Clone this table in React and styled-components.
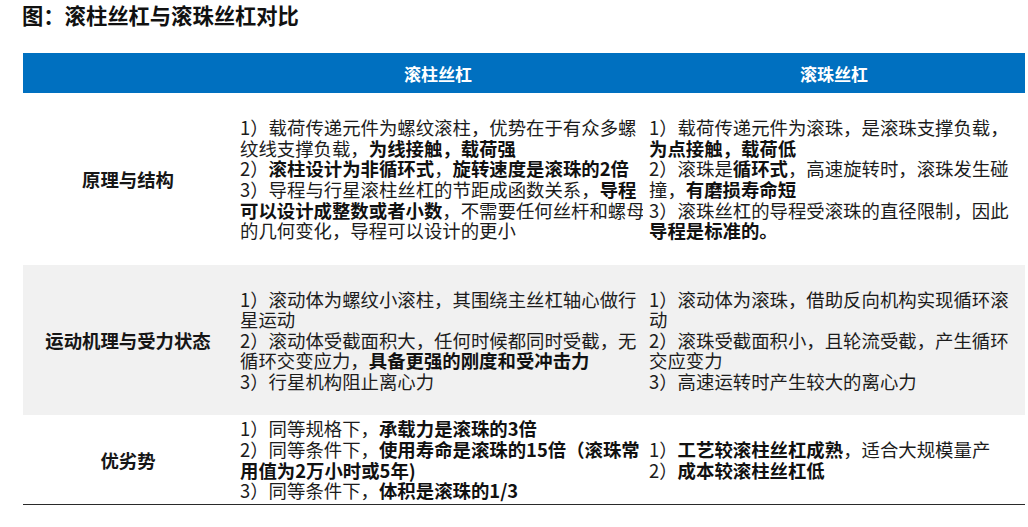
import React from "react";
import styled, { createGlobalStyle } from "styled-components";

const Global = createGlobalStyle`
  html, body { margin: 0; padding: 0; background: #ffffff; }
  body {
    font-family: "Noto Sans CJK SC", "Noto Sans", sans-serif;
    color: #1c1c1c;
  }
`;

const Page = styled.div`
  width: 1028px;
  height: 527px;
  overflow: hidden;
  padding: 0 0 0 22px;
  box-sizing: border-box;
`;

const Title = styled.h1`
  margin: 0 0 25px 0;
  padding-top: 1px;
  font-size: 21.3px;
  line-height: 27px;
  font-weight: 700;
  color: #111;
`;

const Table = styled.div`
  display: grid;
  grid-template-columns: 210px 410px 382px;
  grid-template-rows: 40px 172px 150px 89px;
  margin-left: 1px;
  width: 1002px;
  border-bottom: 1.5px solid #2a2a2a;
`;

const HeadCell = styled.div`
  background: #0070c0;
  color: #ffffff;
  font-weight: 700;
  font-size: 17px;
  display: flex;
  align-items: center;
  justify-content: center;
`;

const LabelCell = styled.div`
  background: ${(p) => (p.$shade ? "#f1f1f1" : "#ffffff")};
  display: flex;
  align-items: center;
  justify-content: center;
  font-size: 18.4px;
  font-weight: 700;
  color: #161616;
`;

const TextCell = styled.div`
  background: ${(p) => (p.$shade ? "#f1f1f1" : "#ffffff")};
  display: flex;
  flex-direction: column;
  justify-content: center;
  padding-left: ${(p) => p.$pad}px;
  font-size: 18.4px;
  line-height: 20.6px;
  color: #1c1c1c;
`;

const Line = styled.div`
  white-space: nowrap;
`;

const B = styled.b`
  font-weight: 700;
  color: #111;
`;

const rows = [
  {
    label: "原理与结构",
    shade: false,
    a: [
      ["1）载荷传递元件为螺纹滚柱，优势在于有众多螺"],
      ["纹线支撑负载，", <B key="b">为线接触，载荷强</B>],
      ["2）", <B key="b1">滚柱设计为非循环式</B>, "，", <B key="b2">旋转速度是滚珠的2倍</B>],
      ["3）导程与行星滚柱丝杠的节距成函数关系，", <B key="b">导程</B>],
      [<B key="b">可以设计成整数或者小数</B>, "，不需要任何丝杆和螺母"],
      ["的几何变化，导程可以设计的更小"],
    ],
    b: [
      ["1）载荷传递元件为滚珠，是滚珠支撑负载，"],
      [<B key="b">为点接触，载荷低</B>],
      ["2）滚珠是", <B key="b">循环式</B>, "，高速旋转时，滚珠发生碰"],
      ["撞，", <B key="b">有磨损寿命短</B>],
      ["3）滚珠丝杠的导程受滚珠的直径限制，因此"],
      [<B key="b">导程是标准的。</B>],
    ],
  },
  {
    label: "运动机理与受力状态",
    shade: true,
    a: [
      ["1）滚动体为螺纹小滚柱，其围绕主丝杠轴心做行"],
      ["星运动"],
      ["2）滚动体受截面积大，任何时候都同时受截，无"],
      ["循环交变应力，", <B key="b">具备更强的刚度和受冲击力</B>],
      ["3）行星机构阻止离心力"],
    ],
    b: [
      ["1）滚动体为滚珠，借助反向机构实现循环滚"],
      ["动"],
      ["2）滚珠受截面积小，且轮流受截，产生循环"],
      ["交应变力"],
      ["3）高速运转时产生较大的离心力"],
    ],
  },
  {
    label: "优劣势",
    shade: false,
    a: [
      ["1）同等规格下，", <B key="b">承载力是滚珠的3倍</B>],
      ["2）同等条件下，", <B key="b">使用寿命是滚珠的15倍（滚珠常</B>],
      [<B key="b">用值为2万小时或5年)</B>],
      ["3）同等条件下，", <B key="b">体积是滚珠的1/3</B>],
    ],
    b: [
      ["1）", <B key="b">工艺较滚柱丝杠成熟</B>, "，适合大规模量产"],
      ["2）", <B key="b">成本较滚柱丝杠低</B>],
    ],
  },
];

export default function App() {
  return (
    <>
      <Global />
      <Page>
        <Title>图：滚柱丝杠与滚珠丝杠对比</Title>
        <Table>
          <HeadCell />
          <HeadCell>滚柱丝杠</HeadCell>
          <HeadCell>滚珠丝杠</HeadCell>
          {rows.map((r) => (
            <React.Fragment key={r.label}>
              <LabelCell $shade={r.shade}>{r.label}</LabelCell>
              <TextCell $shade={r.shade} $pad={7}>
                {r.a.map((l, i) => (
                  <Line key={i}>{l}</Line>
                ))}
              </TextCell>
              <TextCell $shade={r.shade} $pad={6}>
                {r.b.map((l, i) => (
                  <Line key={i}>{l}</Line>
                ))}
              </TextCell>
            </React.Fragment>
          ))}
        </Table>
      </Page>
    </>
  );
}
